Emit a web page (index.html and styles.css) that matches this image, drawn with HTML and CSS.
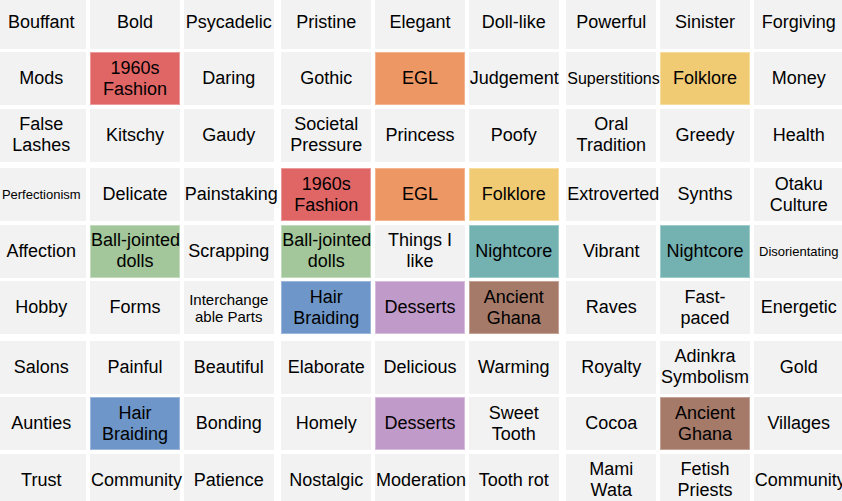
FILE: index.html
```html
<!DOCTYPE html>
<html>
<head>
<meta charset="utf-8">
<link rel="stylesheet" href="styles.css">
</head>
<body>
<div class="chart">
  <div class="block">
    <div class="cell">Bouffant</div><div class="cell">Bold</div><div class="cell">Psycadelic</div>
    <div class="cell">Mods</div><div class="cell red">1960s Fashion</div><div class="cell">Daring</div>
    <div class="cell">False Lashes</div><div class="cell">Kitschy</div><div class="cell">Gaudy</div>
  </div>
  <div class="block">
    <div class="cell">Pristine</div><div class="cell">Elegant</div><div class="cell">Doll-like</div>
    <div class="cell">Gothic</div><div class="cell orange">EGL</div><div class="cell">Judgement</div>
    <div class="cell">Societal Pressure</div><div class="cell">Princess</div><div class="cell">Poofy</div>
  </div>
  <div class="block">
    <div class="cell">Powerful</div><div class="cell">Sinister</div><div class="cell">Forgiving</div>
    <div class="cell s16">Superstitions</div><div class="cell yellow">Folklore</div><div class="cell">Money</div>
    <div class="cell">Oral Tradition</div><div class="cell">Greedy</div><div class="cell">Health</div>
  </div>

  <div class="block">
    <div class="cell s13">Perfectionism</div><div class="cell">Delicate</div><div class="cell">Painstaking</div>
    <div class="cell">Affection</div><div class="cell green"><span class="nw">Ball-jointed</span> dolls</div><div class="cell">Scrapping</div>
    <div class="cell">Hobby</div><div class="cell">Forms</div><div class="cell s15">Interchange<br>able Parts</div>
  </div>
  <div class="block">
    <div class="cell red">1960s Fashion</div><div class="cell orange">EGL</div><div class="cell yellow">Folklore</div>
    <div class="cell green"><span class="nw">Ball-jointed</span> dolls</div><div class="cell">Things I like</div><div class="cell teal">Nightcore</div>
    <div class="cell blue">Hair Braiding</div><div class="cell purple">Desserts</div><div class="cell brown">Ancient Ghana</div>
  </div>
  <div class="block">
    <div class="cell">Extroverted</div><div class="cell">Synths</div><div class="cell">Otaku Culture</div>
    <div class="cell">Vibrant</div><div class="cell teal">Nightcore</div><div class="cell s13">Disorientating</div>
    <div class="cell">Raves</div><div class="cell">Fast-paced</div><div class="cell">Energetic</div>
  </div>

  <div class="block">
    <div class="cell">Salons</div><div class="cell">Painful</div><div class="cell">Beautiful</div>
    <div class="cell">Aunties</div><div class="cell blue">Hair Braiding</div><div class="cell">Bonding</div>
    <div class="cell">Trust</div><div class="cell">Community</div><div class="cell">Patience</div>
  </div>
  <div class="block">
    <div class="cell">Elaborate</div><div class="cell">Delicious</div><div class="cell">Warming</div>
    <div class="cell">Homely</div><div class="cell purple">Desserts</div><div class="cell">Sweet Tooth</div>
    <div class="cell">Nostalgic</div><div class="cell">Moderation</div><div class="cell">Tooth rot</div>
  </div>
  <div class="block">
    <div class="cell">Royalty</div><div class="cell">Adinkra Symbolism</div><div class="cell">Gold</div>
    <div class="cell">Cocoa</div><div class="cell brown">Ancient Ghana</div><div class="cell">Villages</div>
    <div class="cell">Mami Wata</div><div class="cell">Fetish Priests</div><div class="cell">Community</div>
  </div>
</div>
</body>
</html>
```

FILE: styles.css
```css
html, body {
  margin: 0;
  padding: 0;
  background: #ffffff;
  overflow: hidden;
}

body {
  width: 842px;
  height: 501px;
  font-family: "Liberation Sans", Arial, sans-serif;
  color: #000000;
}

.chart {
  display: grid;
  grid-template-columns: repeat(3, auto);
  justify-content: start;
  align-content: start;
  column-gap: 7.5px;
  row-gap: 6.5px;
  margin: -4.5px 0 0 -3.75px;
  width: 860px;
}

.block {
  display: grid;
  grid-template-columns: repeat(3, 90px);
  grid-template-rows: repeat(3, 53px);
  column-gap: 3.75px;
  row-gap: 3.5px;
}

.cell {
  box-sizing: border-box;
  display: flex;
  flex-direction: column;
  justify-content: center;
  text-align: center;
  background: #f2f2f2;
  border: 1px solid #f2f2f2;
  font-size: 18px;
  line-height: 21px;
  white-space: normal;
}

.nw { white-space: nowrap; }

.s16 { font-size: 16px; line-height: 19px; }
.s15 { font-size: 15px; line-height: 17px; }
.s13 { font-size: 13px; line-height: 15px; }

.red    { background: #e06666; border-color: #ea9a9a; }
.orange { background: #ed9864; border-color: #f3b590; }
.yellow { background: #f1ca74; border-color: #f6dc9f; }
.green  { background: #a3c79a; border-color: #c2dbbc; }
.teal   { background: #74b1b1; border-color: #a0cbcb; }
.blue   { background: #6e96c8; border-color: #9db7dc; }
.purple { background: #c09ac8; border-color: #d6bddc; }
.brown  { background: #a57a69; border-color: #c4a396; }
```
